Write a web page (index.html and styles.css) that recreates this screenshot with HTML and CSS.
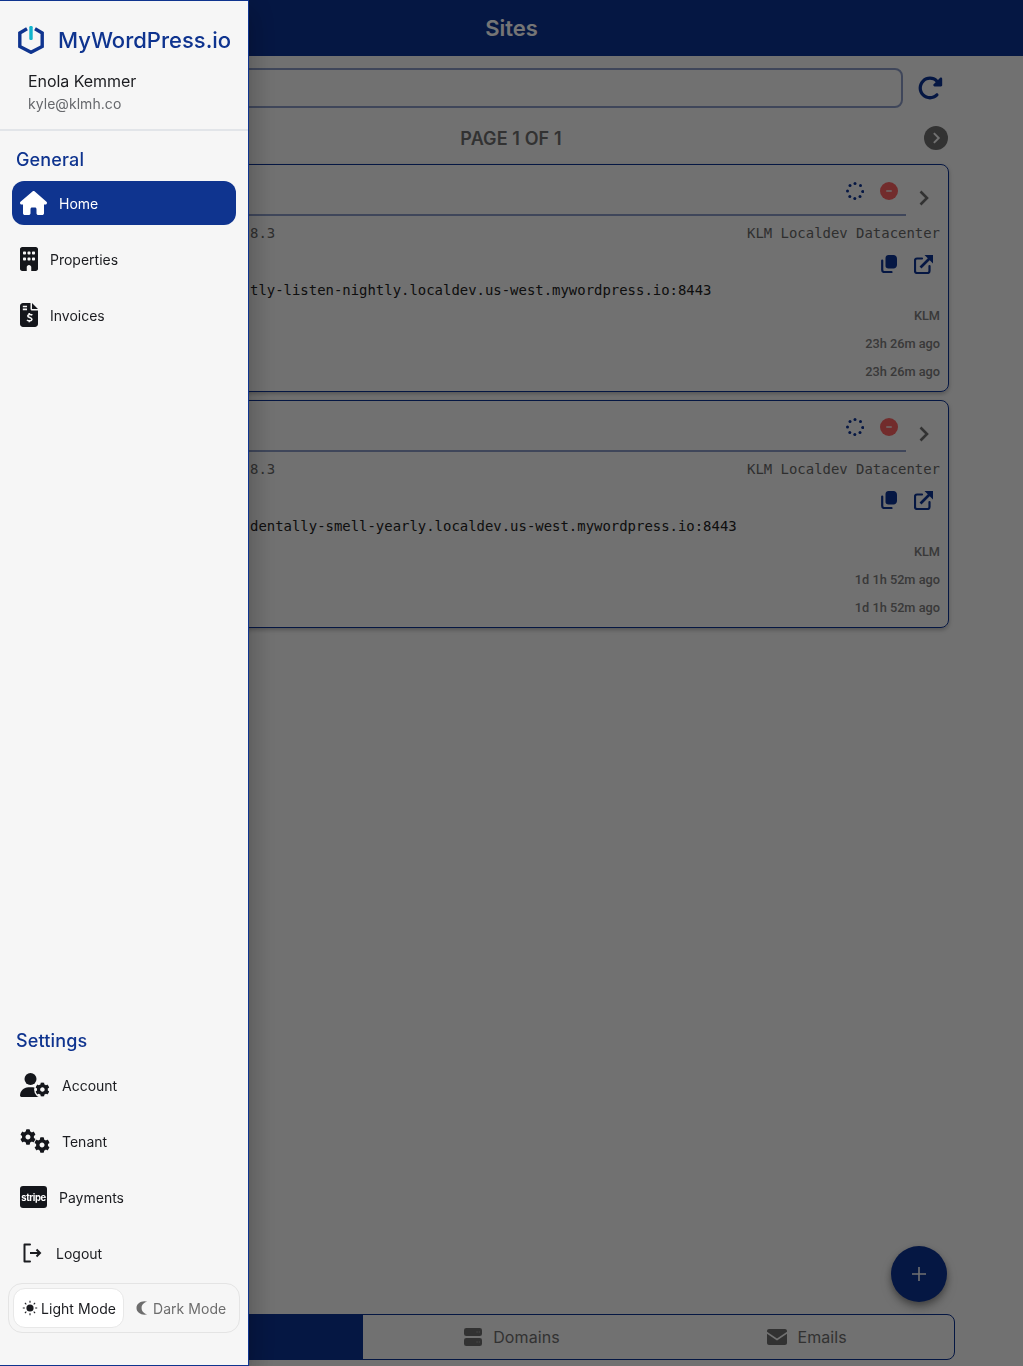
FILE: index.html
```html
<!DOCTYPE html>
<html lang="en">
<head>
<meta charset="utf-8">
<title>Sites</title>
<link rel="stylesheet" href="styles.css">
</head>
<body>
<svg class="defs" width="0" height="0" aria-hidden="true">
  <symbol id="cog" viewBox="0 0 512 512"><path fill-rule="evenodd" d="M487.4 315.7l-42.6-24.6c4.3-23.2 4.3-47 0-70.2l42.6-24.6c4.9-2.8 7.1-8.6 5.5-14-11.1-35.6-30-67.8-54.7-94.6-3.8-4.1-10-5.1-14.8-2.3L380.8 110c-17.9-15.4-38.5-27.3-60.8-35.1V25.8c0-5.6-3.9-10.5-9.4-11.7-36.7-8.2-74.3-7.8-109.2 0-5.5 1.2-9.4 6.1-9.4 11.7V75c-22.2 7.9-42.8 19.8-60.8 35.1L88.7 85.5c-4.9-2.8-11-1.9-14.8 2.3-24.7 26.7-43.6 58.9-54.7 94.6-1.7 5.4.6 11.2 5.5 14L67.3 221c-4.3 23.2-4.3 47 0 70.2l-42.6 24.6c-4.9 2.8-7.1 8.6-5.5 14 11.1 35.6 30 67.8 54.7 94.6 3.8 4.1 10 5.1 14.8 2.3l42.6-24.6c17.9 15.4 38.5 27.3 60.8 35.1v49.2c0 5.6 3.9 10.5 9.4 11.7 36.7 8.2 74.3 7.8 109.2 0 5.5-1.2 9.4-6.1 9.4-11.7v-49.2c22.2-7.9 42.8-19.8 60.8-35.1l42.6 24.6c4.9 2.8 11 1.9 14.8-2.3 24.7-26.7 43.6-58.9 54.7-94.6 1.5-5.5-.7-11.3-5.6-14.1zM256 336c-44.1 0-80-35.9-80-80s35.9-80 80-80 80 35.9 80 80-35.9 80-80 80z"/></symbol>
  <symbol id="copy" viewBox="0 0 16 18"><path d="M7.500 0h5C14.400 0 16 1.600 16 3.500V10c0 1.900-1.600 3.500-3.500 3.500h-5C5.600 13.500 4.500 12.400 4.500 11V3C4.500 1.300 5.800 0 7.500 0z"/><path d="M1.200 5.500V15c0 1.100.9 2 2 2h7.300" fill="none" stroke="currentColor" stroke-width="2.200" stroke-linecap="round"/></symbol>
  <symbol id="open" viewBox="0 0 19 19"><path d="M8 3.500H3C1.900 3.500 1 4.400 1 5.500V16c0 1.100.9 2 2 2h10.500c1.100 0 2-.9 2-2v-5" fill="none" stroke="currentColor" stroke-width="2.200" stroke-linecap="round"/><path d="M6.500 12.500L15.500 3.500" fill="none" stroke="currentColor" stroke-width="2.600"/><path d="M10.500 0H19V8.500z"/></symbol>
  <symbol id="minus-badge" viewBox="0 0 18 18"><circle cx="9" cy="9" r="9" fill="currentColor"/><rect x="6" y="8" width="6" height="2" rx="1" fill="#f5c9c9"/></symbol>
  <symbol id="spin" viewBox="0 0 18 18"><g fill="currentColor"><circle cx="9" cy="1.500" r="1.500"/><circle cx="14.500" cy="3.500" r="1.500"/><circle cx="16.700" cy="9.500" r="1.500"/><circle cx="14" cy="14.500" r="1.500"/><circle cx="8.800" cy="16.500" r="1.500"/><circle cx="3.800" cy="14.500" r="1.500"/><circle cx="1.500" cy="9" r="1.500"/><circle cx="4" cy="3.500" r="1.500"/></g></symbol>
  <symbol id="chev" viewBox="0 0 12 16"><path d="M2.500 1.500L9 8l-6.500 6.500" fill="none" stroke="currentColor" stroke-width="2.600"/></symbol>
</svg>

<div class="page">
  <header class="topbar"><h1 class="topbar-title">Sites</h1></header>
  <main class="content">
    <div class="search-row">
      <div class="search-field"></div>
      <svg class="refresh" viewBox="0 0 512 512"><path d="M463.500 224H472c13.300 0 24-10.700 24-24V72c0-9.700-5.800-18.500-14.800-22.200s-19.300-1.700-26.200 5.200L413.400 96.600c-87.600-86.500-228.700-86.200-315.800 1c-87.500 87.500-87.500 229.300 0 316.800s229.300 87.500 316.800 0c12.500-12.500 12.500-32.800 0-45.300s-32.800-12.500-45.300 0c-62.500 62.500-163.800 62.500-226.300 0s-62.500-163.800 0-226.300c62.200-62.200 162.700-62.500 225.300-1L327 183c-6.900 6.900-8.900 17.200-5.200 26.200s12.500 14.800 22.200 14.800H463.500z"/></svg>
    </div>
    <div class="pager">
      <span></span>
      <span class="pager-label">PAGE 1 OF 1</span>
      <span class="pager-next"><svg class="pager-chev"><use href="#chev"/></svg></span>
    </div>

    <article class="card">
      <div class="card-head">
        <div class="card-status">
          <svg class="spin"><use href="#spin"/></svg>
          <svg class="badge"><use href="#minus-badge"/></svg>
        </div>
        <svg class="card-chev"><use href="#chev"/></svg>
      </div>
      <div class="row row-a mono"><span>8.3</span><span>KLM Localdev Datacenter</span></div>
      <div class="row row-b"><svg class="act act-copy"><use href="#copy"/></svg><svg class="act act-open"><use href="#open"/></svg></div>
      <div class="row row-c mono url">tly-listen-nightly.localdev.us-west.mywordpress.io:8443</div>
      <div class="row row-d meta">KLM</div>
      <div class="row row-d meta">23h 26m ago</div>
      <div class="row row-d meta">23h 26m ago</div>
    </article>

    <article class="card">
      <div class="card-head">
        <div class="card-status">
          <svg class="spin"><use href="#spin"/></svg>
          <svg class="badge"><use href="#minus-badge"/></svg>
        </div>
        <svg class="card-chev"><use href="#chev"/></svg>
      </div>
      <div class="row row-a mono"><span>8.3</span><span>KLM Localdev Datacenter</span></div>
      <div class="row row-b"><svg class="act act-copy"><use href="#copy"/></svg><svg class="act act-open"><use href="#open"/></svg></div>
      <div class="row row-c mono url">dentally-smell-yearly.localdev.us-west.mywordpress.io:8443</div>
      <div class="row row-d meta">KLM</div>
      <div class="row row-d meta">1d 1h 52m ago</div>
      <div class="row row-d meta">1d 1h 52m ago</div>
    </article>
  </main>

  <button class="fab" aria-label="Add"><svg viewBox="0 0 16 16"><path d="M8 1v14M1 8h14" fill="none" stroke="currentColor" stroke-width="1.600"/></svg></button>

  <nav class="tabs">
    <div class="tab tab-active"></div>
    <div class="tab">
      <svg class="tab-icon tab-icon-server" viewBox="0 0 20 20"><rect y="0" width="20" height="9" rx="2.500"/><rect y="11" width="20" height="9" rx="2.500"/><g fill="#9a9a9a"><circle cx="14.500" cy="4.500" r=".8"/><circle cx="17" cy="4.500" r=".8"/><circle cx="14.500" cy="15.500" r=".8"/><circle cx="17" cy="15.500" r=".8"/></g></svg>
      <span>Domains</span>
    </div>
    <div class="tab">
      <svg class="tab-icon tab-icon-mail" viewBox="0 0 20 16"><path d="M2 0h16c1.100 0 2 .9 2 2v.8L10 9.500 0 2.800V2C0 .9.900 0 2 0z"/><path d="M0 4.800l10 6.700 10-6.700V14c0 1.100-.9 2-2 2H2c-1.100 0-2-.9-2-2z"/></svg>
      <span>Emails</span>
    </div>
  </nav>
</div>

<div class="scrim"></div>

<aside class="drawer">
  <div class="brand">
    <svg class="brand-mark" viewBox="0 0 26 28"><path d="M9 2.800L1.800 7V20.500L13 26.300 24.200 20.500V7L17 2.800" fill="none" stroke="#0f348f" stroke-width="3.400"/><rect x="11.300" y="0" width="3.400" height="14" rx="1.200" fill="#10b4cc"/></svg>
    <span class="brand-name">MyWordPress.io</span>
  </div>
  <div class="user">
    <div class="user-name">Enola Kemmer</div>
    <div class="user-mail">kyle@klmh.co</div>
  </div>

  <section class="nav-group">
    <h2 class="nav-title">General</h2>
    <a class="nav-item nav-item-active">
      <svg class="ico ico-27" viewBox="0 0 576 512"><path d="M575.800 255.500c0 18-15 32.100-32 32.100h-32l.7 160.200c0 2.700-.2 5.400-.5 8.100V472c0 22.100-17.900 40-40 40H456c-1.100 0-2.200 0-3.300-.1c-1.400 .1-2.800 .1-4.200 .1H416 392c-22.100 0-40-17.900-40-40V448 384c0-17.700-14.300-32-32-32H256c-17.700 0-32 14.300-32 32v64 24c0 22.100-17.900 40-40 40H160 128.100c-1.500 0-3-.1-4.500-.2c-1.200 .1-2.400 .2-3.600 .2H104c-22.100 0-40-17.900-40-40V360c0-.9 0-1.900 .1-2.800V287.600H32c-18 0-32-14-32-32.100c0-9 3-17 10-24L266.400 8c7-7 15-8 22-8s15 2 21 7L564.800 231.500c8 7 12 15 11 24z"/></svg>
      <span>Home</span>
    </a>
    <a class="nav-item">
      <svg class="ico ico-18" viewBox="0 0 384 512"><path d="M48 0C21.500 0 0 21.500 0 48V464c0 26.500 21.500 48 48 48h96V432c0-26.500 21.500-48 48-48s48 21.500 48 48v80h96c26.500 0 48-21.500 48-48V48c0-26.500-21.500-48-48-48H48zM64 240c0-8.800 7.200-16 16-16h32c8.800 0 16 7.200 16 16v32c0 8.800-7.200 16-16 16H80c-8.800 0-16-7.200-16-16V240zm112-16h32c8.800 0 16 7.200 16 16v32c0 8.800-7.200 16-16 16H176c-8.800 0-16-7.200-16-16V240c0-8.800 7.200-16 16-16zm80 16c0-8.800 7.200-16 16-16h32c8.800 0 16 7.200 16 16v32c0 8.800-7.200 16-16 16H272c-8.800 0-16-7.200-16-16V240zM80 96h32c8.800 0 16 7.200 16 16v32c0 8.800-7.200 16-16 16H80c-8.800 0-16-7.200-16-16V112c0-8.800 7.200-16 16-16zm80 16c0-8.800 7.200-16 16-16h32c8.800 0 16 7.200 16 16v32c0 8.800-7.200 16-16 16H176c-8.800 0-16-7.200-16-16V112zM272 96h32c8.800 0 16 7.200 16 16v32c0 8.800-7.200 16-16 16H272c-8.800 0-16-7.200-16-16V112c0-8.800 7.200-16 16-16z"/></svg>
      <span>Properties</span>
    </a>
    <a class="nav-item">
      <svg class="ico ico-18" viewBox="0 0 384 512"><path d="M64 0C28.700 0 0 28.700 0 64V448c0 35.300 28.700 64 64 64H320c35.300 0 64-28.700 64-64V160H256c-17.700 0-32-14.300-32-32V0H64zM256 0V128H384L256 0z"/><path d="M60 76h90M60 136h90" stroke="#f6f6f6" stroke-width="34"/><path d="M262 262c-14-22-88-28-96 14-6 40 92 30 88 76-4 38-84 36-104 8M196 212v36M196 376v36" fill="none" stroke="#f6f6f6" stroke-width="34"/></svg>
      <span>Invoices</span>
    </a>
  </section>

  <section class="nav-group nav-group-bottom">
    <h2 class="nav-title">Settings</h2>
    <a class="nav-item">
      <svg class="ico ico-30" viewBox="0 0 640 512"><circle cx="224" cy="128" r="128"/><path d="M178.300 304h91.400C368.200 304 448 383.800 448 482.300c0 16.400-13.300 29.700-29.700 29.700H29.700C13.300 512 0 498.700 0 482.300 0 383.800 79.800 304 178.300 304z"/><circle cx="478" cy="352" r="178" fill="#f6f6f6"/><use href="#cog" x="323" y="197" width="310" height="310"/></svg>
      <span>Account</span>
    </a>
    <a class="nav-item">
      <svg class="ico ico-30" viewBox="0 0 640 512"><use href="#cog" x="0" y="0" width="340" height="340"/><use href="#cog" x="300" y="172" width="340" height="340"/></svg>
      <span>Tenant</span>
    </a>
    <a class="nav-item">
      <span class="stripe-logo">stripe</span>
      <span>Payments</span>
    </a>
    <a class="nav-item">
      <svg class="ico ico-24" viewBox="0 0 24 24"><path d="M10 3.500H4.500v17H10" fill="none" stroke="currentColor" stroke-width="2" stroke-linecap="round" stroke-linejoin="round"/><path d="M10 12h10" fill="none" stroke="currentColor" stroke-width="2"/><path d="M16.500 8.500L20 12l-3.500 3.500" fill="none" stroke="currentColor" stroke-width="2"/></svg>
      <span>Logout</span>
    </a>
  </section>

  <div class="mode">
    <div class="mode-btn mode-btn-on">
      <svg class="mode-ico" viewBox="0 0 16 16"><circle cx="8" cy="8" r="3.600"/><path d="M8 .8v2M8 13.200v2M.8 8h2M13.200 8h2M2.900 2.900l1.400 1.400M11.700 11.700l1.400 1.400M2.900 13.100l1.400-1.400M11.700 4.300l1.400-1.400" stroke="currentColor" stroke-width="1.100"/></svg>
      <span>Light Mode</span>
    </div>
    <div class="mode-btn">
      <svg class="mode-ico mode-ico-moon" viewBox="0 0 12 14"><path d="M8.500.3C4.200.3.500 3.100.500 7s3.700 6.700 8 6.700c1 0 1.900-.2 2.700-.5C7.900 12.600 5.600 10.100 5.600 7s2.300-5.600 5.600-6.200C10.400.5 9.500.3 8.500.3z"/></svg>
      <span>Dark Mode</span>
    </div>
  </div>
</aside>
</body>
</html>
```

FILE: styles.css
```css
* { box-sizing: border-box; }
html, body { margin: 0; padding: 0; height: 100%; }
body { background: #f6f6f6; font-family: "Inter", "Liberation Sans", sans-serif; overflow: hidden; }
.defs { position: absolute; }

.page { height: 1366px; display: flex; flex-direction: column; }
.topbar { height: 56px; flex: none; background: #0d3292; display: flex; align-items: center; justify-content: center; }
.topbar-title { margin: 0; font-size: 22px; font-weight: 600; color: #fff; line-height: 56px; }

.content { flex: 1; padding: 12px 74px 0; display: flex; flex-direction: column; }
.search-row { display: flex; align-items: center; height: 40px; }
.search-field { flex: 1; height: 40px; border: 2px solid #8a9ac4; border-radius: 8px; }
.refresh { width: 26px; height: 26px; margin: 0 6px 0 14px; fill: #0d3292; }

.pager { margin-top: 18px; height: 24px; padding-right: 1px; display: grid; grid-template-columns: 1fr auto 1fr; align-items: center; }
.pager-label { font-size: 18px; font-weight: 600; color: #6e6e6e; letter-spacing: .1px; }
.pager-next { justify-self: end; width: 24px; height: 24px; border-radius: 50%; background: #6e6e6e; display: flex; align-items: center; justify-content: center; color: #f6f6f6; }
.pager-chev { width: 9px; height: 12px; }

.card { margin-top: 14px; height: 228px; border: 1px solid #0d3292; border-radius: 8px; box-shadow: 0 2px 4px rgba(0,0,0,.25); display: flex; flex-direction: column; }
.card + .card { margin-top: 8px; }
.card-head { height: 51px; flex: none; display: flex; }
.card-status { width: 831px; height: 51px; border-bottom: 2px solid #8a9ac4; display: flex; align-items: flex-start; justify-content: flex-end; padding: 17px 8px 0 0; gap: 16px; }
.spin { width: 18px; height: 18px; color: #0d3292; }
.badge { width: 18px; height: 18px; color: #f86060; }
.card-chev { width: 12px; height: 16px; margin: 25px 0 0 12px; color: #6e6e6e; }

.row { flex: none; display: flex; align-items: center; justify-content: space-between; padding: 0 8px 0 175px; }
.row-a { height: 34px; }
.row-b { height: 28px; justify-content: flex-end; gap: 17px; padding-right: 15px; color: #0d3292; fill: #0d3292; }
.row-c { height: 24px; }
.row-d { height: 28px; justify-content: flex-end; }
.row-c + .row-d { margin-top: -1px; }
.mono { font-family: "DejaVu Sans Mono", monospace; font-size: 13.950px; color: #666; }
.url { color: #222; }
.meta { font-family: "Roboto", "Inter", sans-serif; font-size: 12.750px; font-weight: 500; color: #7c7c7c; }
.act-copy { width: 16px; height: 18px; }
.act-open { width: 19px; height: 19px; }

.fab { flex: none; align-self: flex-end; width: 56px; height: 56px; margin: 0 76px 12px 0; padding: 0; border: 0; border-radius: 50%; background: #0d3292; color: #f6f6f6; box-shadow: 0 3px 6px rgba(0,0,0,.3), 0 6px 12px rgba(0,0,0,.2); display: flex; align-items: center; justify-content: center; }
.fab svg { width: 16px; height: 16px; }

.tabs { flex: none; margin: 0 68px 6px 66px; height: 46px; border: 1px solid #0d3292; border-radius: 0 8px 8px 0; display: grid; grid-template-columns: repeat(3, 1fr); }
.tab { display: flex; align-items: center; justify-content: center; gap: 10px; padding-left: 2px; font-size: 16px; letter-spacing: .1px; color: #6e6e6e; }
.tab-active { background: #0d3292; }
.tab-icon { fill: #6e6e6e; }
.tab-icon-server { width: 20px; height: 18px; }
.tab-icon-mail { width: 20px; height: 16px; }

.scrim { position: fixed; inset: 0; background: rgba(0,0,0,.54); }

.drawer { position: fixed; left: 0; top: 0; bottom: 0; width: 249px; background: #f6f6f6; border: 1px solid #0f348f; border-left: 0; display: flex; flex-direction: column; box-shadow: 0 8px 10px -5px rgba(0,0,0,.2), 0 16px 24px 2px rgba(0,0,0,.14), 0 6px 30px 5px rgba(0,0,0,.12); color: #1b1c20; }
.brand { display: flex; align-items: center; gap: 14px; height: 30px; margin: 24px 0 0 18px; }
.brand-mark { width: 26px; height: 28px; flex: none; }
.brand-name { font-size: 22px; font-weight: 500; color: #0f348f; white-space: nowrap; }
.user { padding: 14px 0 0 28px; height: 76px; border-bottom: 2px solid #e2e5e9; }
.user-name { font-size: 16px; line-height: 24px; letter-spacing: -.05px; }
.user-mail { font-size: 14px; line-height: 22px; color: #66686c; letter-spacing: .05px; }

.nav-group { padding: 14px 12px 0; }
.nav-group-bottom { margin-top: auto; padding-top: 0; }
.nav-title { margin: 0 0 6px 4px; font-size: 18px; line-height: 30px; font-weight: 500; color: #0f348f; letter-spacing: .15px; }
.nav-group-bottom .nav-title { margin-bottom: 7px; }
.nav-item { display: flex; align-items: center; gap: 12px; height: 44px; padding-left: 8px; margin-bottom: 12px; font-size: 14px; border-radius: 12px; fill: #14161b; color: #1b1c20; }
.nav-item-active { background: #0f348f; color: #fff; fill: #fff; }
.ico { height: 24px; flex: none; }
.ico-18 { width: 18px; }
.ico-24 { width: 24px; }
.ico-27 { width: 27px; }
.ico-30 { width: 30px; }
.stripe-logo { width: 27px; height: 22px; flex: none; border-radius: 3px; background: #14161b; color: #fff; font-size: 9.500px; font-weight: 700; letter-spacing: -.4px; display: flex; align-items: center; justify-content: center; }

.mode { display: flex; align-items: center; height: 50px; margin: -4px 8px 32px 8px; padding: 4px; border: 1px solid #e4e4e4; border-radius: 14px; }
.mode-btn { display: flex; align-items: center; gap: 3px; height: 40px; padding: 0 7px 0 8px; font-size: 14px; letter-spacing: .05px; color: #6d6d6d; fill: #6d6d6d; white-space: nowrap; }
.mode-btn-on { width: 111px; background: #fff; color: #1b1c20; fill: #1b1c20; border: 1px solid #e8e8e8; border-radius: 12px; }
.mode-btn + .mode-btn { margin-left: 4px; }
.mode-ico { width: 16px; height: 16px; flex: none; }
.mode-ico-moon { width: 12px; height: 14px; margin-right: 2px; }
```
